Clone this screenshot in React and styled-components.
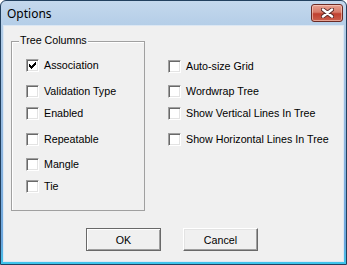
import React from "react";
import styled, { createGlobalStyle } from "styled-components";

const Global = createGlobalStyle`
  html, body { margin: 0; padding: 0; background: #ffffff; }
  body { font-family: "Liberation Sans", Arial, sans-serif; }
  * { box-sizing: border-box; }
`;

const Window = styled.div`
  width: 347px;
  height: 265px;
  border: 1px solid #22405f;
  border-radius: 6px 6px 0 0;
  background: linear-gradient(
    to bottom,
    #c4d8ed 0%,
    #b0cbe6 12%,
    #8fb6df 55%,
    #6aa6dd 92%,
    #3cc6ec 100%
  );
  display: flex;
  flex-direction: column;
  padding: 0 2px 2px 2px;
`;

const TitleBar = styled.div`
  height: 24px;
  display: flex;
  align-items: flex-start;
  padding-left: 4px;
`;

const Title = styled.div`
  font-family: "Noto Sans", "Open Sans", sans-serif;
  font-size: 12px;
  line-height: 16px;
  margin-top: 5px;
  color: #000;
`;

const CloseButton = styled.div`
  margin-left: auto;
  margin-top: 3px;
  margin-right: 1px;
  width: 32px;
  height: 18px;
  border: 1px solid #6b2a24;
  border-radius: 3px;
  background: linear-gradient(to bottom, #e8a090 0%, #d77a68 45%, #c0402f 55%, #cc5f4c 100%);
  box-shadow: inset 0 0 0 1px rgba(255, 220, 210, 0.55);
  display: flex;
  align-items: center;
  justify-content: center;
`;

const Client = styled.div`
  flex: 1;
  background: #f0f0f0;
  border: 1px solid #dce7f3;
  padding: 15px 0 0 7px;
  display: flex;
  flex-direction: column;
`;

const TopRow = styled.div`
  display: flex;
  align-items: flex-start;
`;

const GroupBox = styled.div`
  position: relative;
  width: 134px;
  height: 170px;
  border: 1px solid #a0a0a0;
  box-shadow: inset 1px 1px 0 #ffffff;
  padding: 17px 0 0 14px;
  display: flex;
  flex-direction: column;
`;

const GroupLabel = styled.span`
  position: absolute;
  left: 7px;
  top: -8px;
  padding: 0 1px;
  background: #f0f0f0;
  font-size: 10.7px;
  line-height: 13px;
  color: #000;
`;

const Column = styled.div`
  margin-left: 23px;
  padding-top: 19px;
  display: flex;
  flex-direction: column;
`;

const Row = styled.label`
  display: flex;
  align-items: center;
  height: 13px;
  margin-top: ${(p) => p.$gap || 0}px;
`;

const Box = styled.span`
  width: 13px;
  height: 13px;
  flex: none;
  background: #ffffff;
  border: 1px solid;
  border-color: #a0a0a0 #ffffff #ffffff #a0a0a0;
  box-shadow: inset 1px 1px 0 #696969, inset -1px -1px 0 #e3e3e3;
  display: flex;
  align-items: center;
  justify-content: center;
`;

const LabelText = styled.span`
  margin-left: 5px;
  font-size: 10.7px;
  line-height: 13px;
  color: #000;
  white-space: nowrap;
`;

const ButtonRow = styled.div`
  display: flex;
  gap: 22px;
  margin-top: 17px;
  margin-left: 75px;
`;

const Button = styled.div`
  width: 75px;
  height: 23px;
  display: flex;
  align-items: center;
  justify-content: center;
  font-size: 10.7px;
  color: #000;
  background: #f0f0f0;
  border: 1px solid;
  border-color: ${(p) => (p.$default ? "#696969" : "#ffffff #696969 #696969 #ffffff")};
  box-shadow: ${(p) =>
    p.$default
      ? "inset 1px 1px 0 #ffffff, inset -1px -1px 0 #a0a0a0"
      : "inset -1px -1px 0 #a0a0a0, inset 1px 1px 0 #e3e3e3"};
`;

const CheckMark = () => (
  <svg width="7" height="7" viewBox="0 0 7 7" shapeRendering="crispEdges">
    {[2, 3, 4, 3, 2, 1, 0].map((y, x) => (
      <rect key={x} x={x} y={y} width="1" height="3" fill="#000" />
    ))}
  </svg>
);

const CloseX = () => (
  <svg width="13" height="10" viewBox="0 0 13 10">
    <path d="M2 1.5 L11 8.5 M11 1.5 L2 8.5" stroke="#5a2a28" strokeWidth="4.2" strokeLinecap="round" />
    <path d="M2 1.5 L11 8.5 M11 1.5 L2 8.5" stroke="#ffffff" strokeWidth="2.4" strokeLinecap="round" />
  </svg>
);

const Check = ({ label, checked, gap }) => (
  <Row $gap={gap}>
    <Box>{checked && <CheckMark />}</Box>
    <LabelText>{label}</LabelText>
  </Row>
);

const leftItems = [
  { label: "Association", checked: true, gap: 0 },
  { label: "Validation Type", gap: 13 },
  { label: "Enabled", gap: 9 },
  { label: "Repeatable", gap: 13 },
  { label: "Mangle", gap: 12 },
  { label: "Tie", gap: 9 },
];

const rightItems = [
  { label: "Auto-size Grid", gap: 0 },
  { label: "Wordwrap Tree", gap: 12 },
  { label: "Show Vertical Lines In Tree", gap: 9 },
  { label: "Show Horizontal Lines In Tree", gap: 13 },
];

export default function App() {
  return (
    <>
      <Global />
      <Window>
        <TitleBar>
          <Title>Options</Title>
          <CloseButton>
            <CloseX />
          </CloseButton>
        </TitleBar>
        <Client>
          <TopRow>
            <GroupBox>
              <GroupLabel>Tree Columns</GroupLabel>
              {leftItems.map((it) => (
                <Check key={it.label} {...it} />
              ))}
            </GroupBox>
            <Column>
              {rightItems.map((it) => (
                <Check key={it.label} {...it} />
              ))}
            </Column>
          </TopRow>
          <ButtonRow>
            <Button $default>OK</Button>
            <Button>Cancel</Button>
          </ButtonRow>
        </Client>
      </Window>
    </>
  );
}
